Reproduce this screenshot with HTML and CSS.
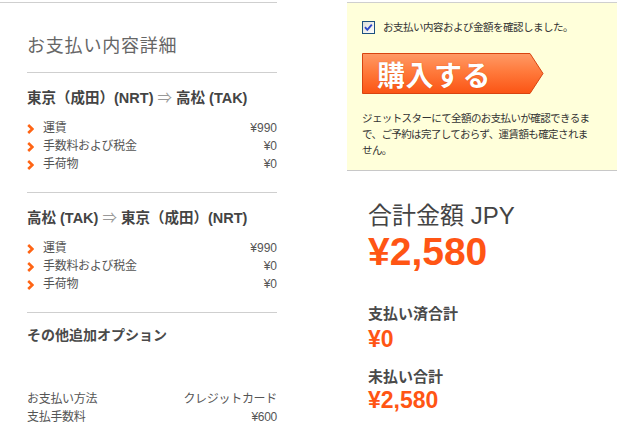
FILE: index.html
```html
<!DOCTYPE html>
<html lang="ja">
<head>
<meta charset="utf-8">
<title>お支払い内容詳細</title>
<link rel="stylesheet" href="styles.css">
</head>
<body>
<div class="page">
  <div class="left">
    <h1 class="title">お支払い内容詳細</h1>
    <section class="sec">
      <h2 class="route">東京（成田）(NRT) <span class="arr">⇒</span> 高松 (TAK)</h2>
      <ul class="items">
        <li><span class="lab"><svg class="chev" width="7" height="10" viewBox="0 0 7 10"><path d="M1.2 1 L5.4 5 L1.2 9" fill="none" stroke="#ff6414" stroke-width="2.6"/></svg>運賃</span><span class="val">¥990</span></li>
        <li><span class="lab"><svg class="chev" width="7" height="10" viewBox="0 0 7 10"><path d="M1.2 1 L5.4 5 L1.2 9" fill="none" stroke="#ff6414" stroke-width="2.6"/></svg>手数料および税金</span><span class="val">¥0</span></li>
        <li><span class="lab"><svg class="chev" width="7" height="10" viewBox="0 0 7 10"><path d="M1.2 1 L5.4 5 L1.2 9" fill="none" stroke="#ff6414" stroke-width="2.6"/></svg>手荷物</span><span class="val">¥0</span></li>
      </ul>
    </section>
    <section class="sec">
      <h2 class="route">高松 (TAK) <span class="arr">⇒</span> 東京（成田）(NRT)</h2>
      <ul class="items">
        <li><span class="lab"><svg class="chev" width="7" height="10" viewBox="0 0 7 10"><path d="M1.2 1 L5.4 5 L1.2 9" fill="none" stroke="#ff6414" stroke-width="2.6"/></svg>運賃</span><span class="val">¥990</span></li>
        <li><span class="lab"><svg class="chev" width="7" height="10" viewBox="0 0 7 10"><path d="M1.2 1 L5.4 5 L1.2 9" fill="none" stroke="#ff6414" stroke-width="2.6"/></svg>手数料および税金</span><span class="val">¥0</span></li>
        <li><span class="lab"><svg class="chev" width="7" height="10" viewBox="0 0 7 10"><path d="M1.2 1 L5.4 5 L1.2 9" fill="none" stroke="#ff6414" stroke-width="2.6"/></svg>手荷物</span><span class="val">¥0</span></li>
      </ul>
    </section>
    <section class="sec last">
      <h2 class="route opt">その他追加オプション</h2>
      <ul class="pay">
        <li><span>お支払い方法</span><span>クレジットカード</span></li>
        <li><span>支払手数料</span><span class="val">¥600</span></li>
      </ul>
    </section>
  </div>
  <div class="right">
    <div class="confirm">
      <label class="check">
        <svg class="box" width="13" height="13" viewBox="0 0 13 13">
          <defs><linearGradient id="cbg" x1="0" y1="0" x2="1" y2="1"><stop offset="0" stop-color="#dcdcd7"/><stop offset="1" stop-color="#ffffff"/></linearGradient></defs>
          <rect x="0.5" y="0.5" width="12" height="12" fill="url(#cbg)" stroke="#1c5180"/>
          <path d="M3 6.2 L5.3 8.8 L9.8 3.6" fill="none" stroke="#2f48c8" stroke-width="1.9"/>
        </svg>
        <span>お支払い内容および金額を確認しました。</span>
      </label>
      <div class="buy">
        <svg class="buybg" width="182" height="41" viewBox="0 0 182 41">
          <defs><linearGradient id="bg" x1="0" y1="0" x2="0" y2="1"><stop offset="0" stop-color="#ff9a66"/><stop offset="0.45" stop-color="#ff7a3c"/><stop offset="1" stop-color="#fb5414"/></linearGradient></defs>
          <polygon points="0.5,0.5 168,0.5 181,20.5 168,40.5 0.5,40.5" fill="url(#bg)" stroke="#d84410"/>
        </svg>
        <span class="buytxt">購入する</span>
      </div>
      <p class="note">ジェットスターにて全額のお支払いが確認できるまで、ご予約は完了しておらず、運賃額も確定されません。</p>
    </div>
    <div class="totals">
      <div class="tlabel">合計金額 JPY</div>
      <div class="tbig">¥2,580</div>
      <div class="slabel">支払い済合計</div>
      <div class="samt">¥0</div>
      <div class="slabel s2">未払い合計</div>
      <div class="samt s3">¥2,580</div>
    </div>
  </div>
</div>
</body>
</html>
```
FILE: styles.css
```css
* { box-sizing: border-box; }
html, body { margin: 0; padding: 0; background: #fff; }
body {
  font-family: "Liberation Sans", "Noto Sans CJK JP", sans-serif;
  color: #555;
  width: 641px;
  height: 445px;
  overflow: hidden;
}
.page {
  display: flex;
  gap: 70px;
  align-items: flex-start;
}
.left {
  width: 277px;
  margin-top: 2px;
  border-top: 1px solid #cfcfcf;
  padding-left: 27px;
}
.title {
  margin: 31px 0 14px;
  font-size: 18px;
  line-height: 24px;
  font-weight: normal;
  color: #666;
  letter-spacing: 0.8px;
}
.sec {
  border-top: 1px solid #cfcfcf;
  padding-top: 15px;
  padding-bottom: 19px;
}
.sec.last { padding-top: 12px; padding-bottom: 0; }
.route {
  margin: 0;
  font-size: 14.5px;
  line-height: 20px;
  font-weight: bold;
  color: #444;
}
.route .arr { color: #999; font-weight: normal; }
.route.opt { font-size: 14px; color: #4a4a4a; }
.items, .pay {
  list-style: none;
  margin: 11px 0 0;
  padding: 0;
}
.items li, .pay li {
  display: flex;
  justify-content: space-between;
  align-items: center;
  font-size: 12px;
  line-height: 18px;
  height: 18px;
}
.lab { display: flex; align-items: center; color: #555; letter-spacing: -0.3px; }
.chev { margin: 1px 9px 0 0; flex: none; }
.val { color: #555; }
.pay { margin-top: 45px; }
.pay li { color: #555; letter-spacing: -0.3px; }

.right {
  width: 270px;
  margin-top: 2px;
  border-top: 1px solid #cfcfcf;
}
.confirm {
  background: #ffffda;
  border-bottom: 1px solid #c8c8c8;
  padding: 18px 0 11px 15px;
  height: 168px;
}
.check {
  display: flex;
  align-items: center;
  height: 13px;
  font-size: 10.5px;
  letter-spacing: -0.5px;
  color: #333;
}
.box { flex: none; margin-right: 8px; }
.check span { margin-top: -2px; }
.buy {
  position: relative;
  width: 182px;
  height: 41px;
  margin-top: 19px;
  display: flex;
  align-items: center;
}
.buybg { position: absolute; left: 0; top: 0; }
.buytxt {
  position: relative;
  padding-left: 15px;
  font-family: "Noto Sans CJK JP", sans-serif;
  font-size: 28px;
  line-height: 40px;
  font-weight: bold;
  color: #fff;
  letter-spacing: 0.5px;
  text-shadow: 0 0 1px #c84000;
}
.note {
  margin: 16px 0 0;
  width: 234px;
  font-size: 10.5px;
  letter-spacing: -0.6px;
  line-height: 16px;
  color: #333;
}
.totals { padding-left: 21px; }
.tlabel {
  margin-top: 31px;
  font-size: 24px;
  line-height: 28px;
  color: #444;
}
.tbig {
  margin-top: 2px;
  font-size: 39px;
  line-height: 40px;
  font-weight: bold;
  color: #ff5514;
}
.slabel {
  margin-top: 32px;
  font-size: 15px;
  line-height: 20px;
  font-weight: bold;
  color: #4a4a4a;
}
.samt {
  margin-top: 3px;
  font-size: 23px;
  line-height: 24px;
  font-weight: bold;
  color: #ff5514;
}
.slabel.s2 { margin-top: 16px; }
.samt.s3 { margin-top: 1px; }
```
